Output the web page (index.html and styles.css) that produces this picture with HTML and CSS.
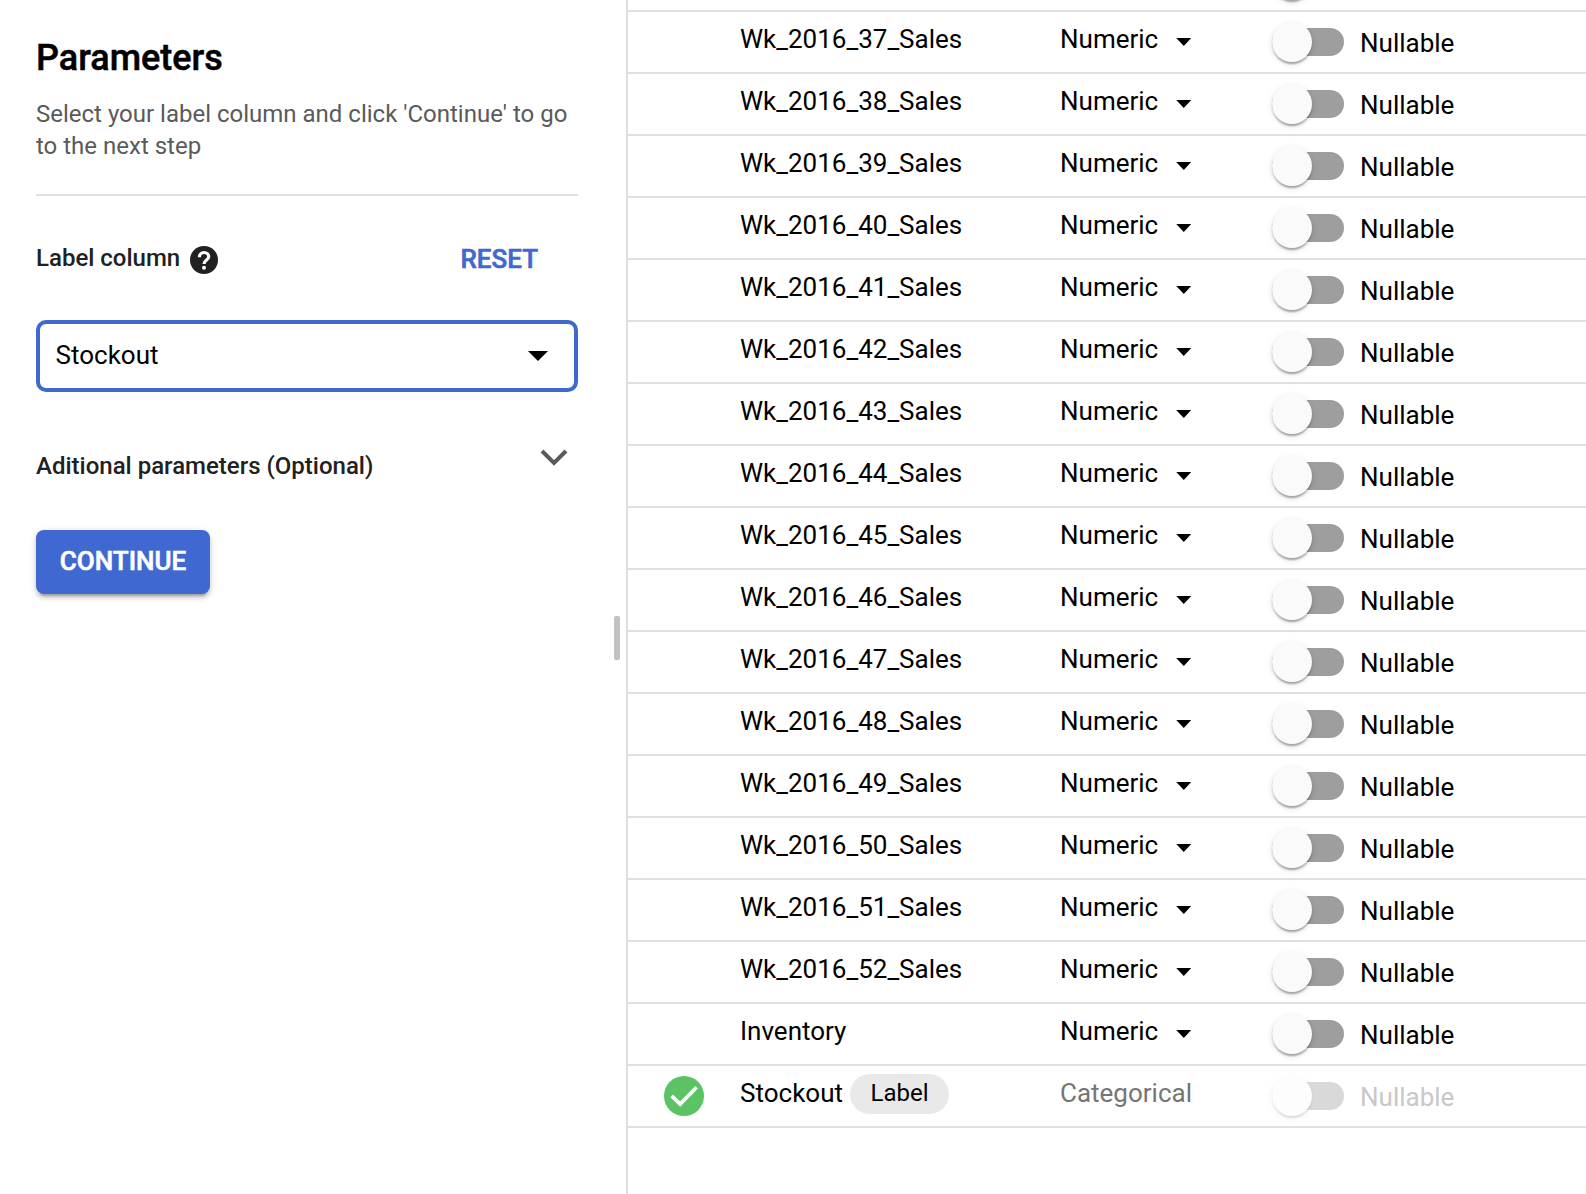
FILE: index.html
```
<!DOCTYPE html>
<html lang="en">
<head>
<meta charset="utf-8">
<title>Parameters</title>
<link rel="stylesheet" href="styles.css">
</head>
<body>
<div class="page">
  <aside class="panel">
    <h1 class="title">Parameters</h1>
    <p class="intro">Select your label column and click 'Continue' to go to the next step</p>
    <div class="label-row">
      <span class="field-label">Label column</span>
      <svg class="help" viewBox="0 0 28 28"><circle cx="14" cy="14" r="14" fill="#212121"/><path fill="none" stroke="#fff" stroke-width="3.200" d="M9.400 11.200c0-2.700 2-4.700 4.600-4.700s4.700 1.900 4.700 4.300c0 3.200-4.700 3.400-4.700 7.200"/><circle cx="14" cy="21.800" r="2" fill="#fff"/></svg>
      <button class="reset">RESET</button>
    </div>
    <div class="select"><span>Stockout</span><svg class="select-arrow" viewBox="0 0 20 10"><path d="M0 0h20L10 10z"/></svg></div>
    <div class="extra">
      <span class="field-label">Aditional parameters (Optional)</span>
      <svg class="chevron" viewBox="0 0 28 17"><path fill="none" stroke="#5a5a5a" stroke-width="4" d="M2 2l12 12L26 2"/></svg>
    </div>
    <button class="continue">CONTINUE</button>
  </aside>
  <div class="splitter"><div class="handle"></div></div>
  <main class="schema">
    <div class="row"><span class="toggle"><i class="knob"></i></span></div>
    <div class="row"><span class="name">Wk_2016_37_Sales</span><span class="type">Numeric<i class="caret"></i></span><span class="toggle"><i class="knob"></i></span><span class="nullable">Nullable</span></div>
    <div class="row"><span class="name">Wk_2016_38_Sales</span><span class="type">Numeric<i class="caret"></i></span><span class="toggle"><i class="knob"></i></span><span class="nullable">Nullable</span></div>
    <div class="row"><span class="name">Wk_2016_39_Sales</span><span class="type">Numeric<i class="caret"></i></span><span class="toggle"><i class="knob"></i></span><span class="nullable">Nullable</span></div>
    <div class="row"><span class="name">Wk_2016_40_Sales</span><span class="type">Numeric<i class="caret"></i></span><span class="toggle"><i class="knob"></i></span><span class="nullable">Nullable</span></div>
    <div class="row"><span class="name">Wk_2016_41_Sales</span><span class="type">Numeric<i class="caret"></i></span><span class="toggle"><i class="knob"></i></span><span class="nullable">Nullable</span></div>
    <div class="row"><span class="name">Wk_2016_42_Sales</span><span class="type">Numeric<i class="caret"></i></span><span class="toggle"><i class="knob"></i></span><span class="nullable">Nullable</span></div>
    <div class="row"><span class="name">Wk_2016_43_Sales</span><span class="type">Numeric<i class="caret"></i></span><span class="toggle"><i class="knob"></i></span><span class="nullable">Nullable</span></div>
    <div class="row"><span class="name">Wk_2016_44_Sales</span><span class="type">Numeric<i class="caret"></i></span><span class="toggle"><i class="knob"></i></span><span class="nullable">Nullable</span></div>
    <div class="row"><span class="name">Wk_2016_45_Sales</span><span class="type">Numeric<i class="caret"></i></span><span class="toggle"><i class="knob"></i></span><span class="nullable">Nullable</span></div>
    <div class="row"><span class="name">Wk_2016_46_Sales</span><span class="type">Numeric<i class="caret"></i></span><span class="toggle"><i class="knob"></i></span><span class="nullable">Nullable</span></div>
    <div class="row"><span class="name">Wk_2016_47_Sales</span><span class="type">Numeric<i class="caret"></i></span><span class="toggle"><i class="knob"></i></span><span class="nullable">Nullable</span></div>
    <div class="row"><span class="name">Wk_2016_48_Sales</span><span class="type">Numeric<i class="caret"></i></span><span class="toggle"><i class="knob"></i></span><span class="nullable">Nullable</span></div>
    <div class="row"><span class="name">Wk_2016_49_Sales</span><span class="type">Numeric<i class="caret"></i></span><span class="toggle"><i class="knob"></i></span><span class="nullable">Nullable</span></div>
    <div class="row"><span class="name">Wk_2016_50_Sales</span><span class="type">Numeric<i class="caret"></i></span><span class="toggle"><i class="knob"></i></span><span class="nullable">Nullable</span></div>
    <div class="row"><span class="name">Wk_2016_51_Sales</span><span class="type">Numeric<i class="caret"></i></span><span class="toggle"><i class="knob"></i></span><span class="nullable">Nullable</span></div>
    <div class="row"><span class="name">Wk_2016_52_Sales</span><span class="type">Numeric<i class="caret"></i></span><span class="toggle"><i class="knob"></i></span><span class="nullable">Nullable</span></div>
    <div class="row"><span class="name">Inventory</span><span class="type">Numeric<i class="caret"></i></span><span class="toggle"><i class="knob"></i></span><span class="nullable">Nullable</span></div>
    <div class="row row-label">
      <svg class="check" viewBox="0 0 40 40"><circle cx="20" cy="20" r="20" fill="#5bc363"/><path fill="none" stroke="#fff" stroke-width="3.600" d="M7.600 19.900l8.600 8.200L32.600 11.300"/></svg>
      <span class="name">Stockout<span class="chip">Label</span></span><span class="type">Categorical</span><span class="toggle"><i class="knob"></i></span><span class="nullable">Nullable</span>
    </div>
  </main>
</div>
</body>
</html>
```
FILE: styles.css
```
* { box-sizing: border-box; }
body {
  margin: 0;
  background: #fff;
  color: #000;
  font-family: Roboto, "Liberation Sans", sans-serif;
  font-size: 26px;
}
button { border: 0; font: inherit; font-weight: 500; cursor: pointer; -webkit-text-stroke: .6px currentColor; }
.page { display: flex; height: 1194px; overflow: hidden; }

.panel { width: 614px; padding: 36px 36px 0; }
.title { margin: 0; font-size: 36px; line-height: 44px; font-weight: 500; -webkit-text-stroke: .5px currentColor; }
.intro {
  width: 542px;
  height: 98px;
  margin: 18px 0 0;
  border-bottom: 2px solid #e0e0e0;
  font-size: 24px;
  line-height: 32px;
  color: #5a5a5a;
}
.label-row { display: flex; align-items: center; width: 542px; margin-top: 44px; height: 40px; }
.field-label { font-size: 24px; line-height: 32px; font-weight: 500; color: #212121; }
.label-row .field-label { margin-top: -4px; }
.help { width: 28px; height: 28px; margin-left: 10px; }
.reset { margin-left: auto; margin-right: 40px; padding: 0; background: none; color: #3f69d1; line-height: 32px; margin-top: -2px; }
.select {
  display: flex;
  align-items: center;
  justify-content: space-between;
  width: 542px;
  height: 72px;
  margin-top: 40px;
  padding: 0 26px 0 15.5px;
  border: 4px solid #3f69d1;
  border-radius: 10px;
}
.select span { margin-top: -2px; }
.select-arrow { width: 20px; height: 10px; }
.extra { display: flex; align-items: flex-start; justify-content: space-between; width: 542px; padding: 57px 10px 0 0; height: 138px; }
.extra .field-label { margin-top: 1px; }
.chevron { width: 28px; height: 17px; }
.continue {
  display: block;
  width: 174px;
  height: 64px;
  padding: 0 0 2px;
  border-radius: 8px;
  background: #3f69d1;
  color: #fff;
  box-shadow: 0 6px 2px -4px rgba(0,0,0,.2), 0 4px 4px rgba(0,0,0,.14), 0 2px 10px rgba(0,0,0,.12);
}

.splitter { width: 14px; padding-top: 616px; border-right: 2px solid #e0e0e0; }
.handle { width: 6px; height: 44px; border-radius: 2px; background: #c1c1c1; }

.schema { flex: 1; margin-top: -50px; }
.row {
  display: grid;
  grid-template-columns: 112px 320px 212px 88px 1fr;
  height: 62px;
  border-bottom: 2px solid #e0e0e0;
  line-height: 30px;
}
.check { grid-column: 1; grid-row: 1; width: 40px; height: 40px; margin: 10px 0 0 36px; }
.name { grid-column: 2; grid-row: 1; display: flex; padding-top: 12px; }
.type { grid-column: 3; display: flex; padding-top: 12px; }
.caret {
  width: 15px;
  height: 8px;
  margin: 14px 0 0 18px;
  background: #000;
  clip-path: polygon(0 0, 100% 0, 50% 100%);
}
.toggle { grid-column: 4; width: 72px; height: 28px; margin-top: 16px; border-radius: 14px; background: #9e9e9e; }
.knob {
  display: block;
  width: 40px;
  height: 40px;
  margin-top: -6px;
  border-radius: 50%;
  background: #fafafa;
  box-shadow: 0 4px 2px -2px rgba(0,0,0,.2), 0 2px 2px rgba(0,0,0,.14), 0 2px 6px rgba(0,0,0,.12);
}
.nullable { grid-column: 5; padding-top: 16px; }
.chip {
  height: 40px;
  margin: -4px 0 0 7.5px;
  padding: 0 20px;
  border-radius: 20px;
  background: #e9e9e9;
  font-size: 24px;
  line-height: 39px;
}
.row-label .type { color: #757575; }
.row-label .toggle { opacity: .38; }
.row-label .nullable { color: #c8c8c8; }
```
